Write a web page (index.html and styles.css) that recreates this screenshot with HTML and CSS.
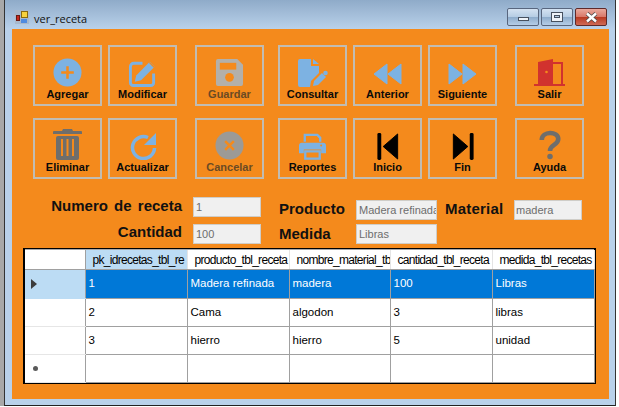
FILE: index.html
```html
<!DOCTYPE html>
<html lang="es">
<head>
  <meta charset="UTF-8" />
  <title>ver_receta</title>
  <meta name="viewport" content="width=device-width, initial-scale=1" />
  <link rel="stylesheet" href="styles.css">
</head>
<body>

  <div class="window">
    <div class="titlebar">
      <svg class="appicon" width="14" height="14" viewBox="0 0 14 14">
        <rect x="0" y="0" width="14" height="14" fill="#a9b9cc"/>
        <rect x="6.500" y="1.500" width="6" height="6" fill="#f7d23e" stroke="#8a6a10"/>
        <rect x="1.500" y="5.500" width="3" height="5" fill="#c8281e" stroke="#6d1a12"/>
        <rect x="6" y="9" width="6" height="4" fill="#4f8be0"/>
      </svg>
      <span class="wintitle">ver_receta</span>
      <div class="wincontrols">
        <div class="winbtn"><span class="min-glyph"></span></div>
        <div class="winbtn"><span class="max-glyph"></span></div>
        <div class="winbtn close">
          <svg width="13" height="11" viewBox="0 0 13 11"><path d="M2 1.500 L11 9.500 M11 1.500 L2 9.500" stroke="#4a4a4a" stroke-width="4"/><path d="M2 1.500 L11 9.500 M11 1.500 L2 9.500" stroke="#fff" stroke-width="2.400"/></svg>
        </div>
      </div>
    </div>

    <div class="content">
      <div class="toolbar">
        <div class="tool">
          <svg width="29" height="29" viewBox="0 0 30 30"><circle cx="15" cy="15" r="14.500" fill="#7db2e2"/><path d="M15 8.500v13M8.500 15h13" stroke="#f48a1c" stroke-width="2.600"/></svg>
          <span>Agregar</span>
        </div>
        <div class="tool">
          <svg width="29" height="29" viewBox="0 0 30 30"><path d="M15 5.500H6a3.500 3.500 0 0 0-3.500 3.500v16.500A3 3 0 0 0 5.500 28.500h18a3 3 0 0 0 3-3V16" fill="none" stroke="#7db2e2" stroke-width="3"/><path d="M8.500 18l14-14 5 5-14 14-6.500 1.500z" fill="#7db2e2"/><path d="M22 4.500l5 5" stroke="#f48a1c" stroke-width="1.300"/></svg>
          <span>Modificar</span>
        </div>
        <div class="tool gap">
          <svg width="29" height="29" viewBox="0 0 30 30"><path d="M3 1h20l6 6v20a2 2 0 0 1-2 2H3a2 2 0 0 1-2-2V3a2 2 0 0 1 2-2z" fill="#b3b0aa"/><rect x="5" y="5" width="17" height="7" fill="#f48a1c"/><circle cx="15" cy="20" r="4.500" fill="#f48a1c"/></svg>
          <span class="off">Guardar</span>
        </div>
        <div class="tool gap-small">
          <svg width="30" height="28" viewBox="0 0 30 28"><path d="M2 0h11v7h8v7l-8 8-1 6H2a2 2 0 0 1-2-2V2a2 2 0 0 1 2-2z" fill="#7db2e2"/><path d="M15 0l6 5h-6z" fill="#7db2e2"/><path d="M15 27l1-5 8-8 4 4-8 8z" fill="#7db2e2"/><circle cx="27.500" cy="14" r="2.300" fill="#7db2e2"/></svg>
          <span>Consultar</span>
        </div>
        <div class="tool">
          <svg class="ic-arrows" width="29" height="22" viewBox="0 0 29 22"><path d="M14 1v20L1 11zM28 1v20L15 11z" fill="#7db2e2" stroke="#7db2e2" stroke-linejoin="round"/></svg>
          <span>Anterior</span>
        </div>
        <div class="tool">
          <svg class="ic-arrows" width="29" height="22" viewBox="0 0 29 22"><path d="M1 1v20l13-10zM15 1v20l13-10z" fill="#7db2e2" stroke="#7db2e2" stroke-linejoin="round"/></svg>
          <span>Siguiente</span>
        </div>
        <div class="tool gap-wide">
          <svg width="31" height="28" viewBox="0 0 31 28"><path d="M4 3l15-3v27H0v-2h4z" fill="#d1322e"/><circle cx="12.500" cy="13" r="1.300" fill="#f48a1c"/><path d="M19 4h9v22h3" fill="none" stroke="#d1322e" stroke-width="2"/><path d="M19 26h12" stroke="#d1322e" stroke-width="2"/></svg>
          <span>Salir</span>
        </div>
      </div>

      <div class="toolbar second">
        <div class="tool">
          <svg width="29" height="32" viewBox="0 0 29 32"><path d="M10 1h9l1 2h8a1 1 0 0 1 1 1v2H0V4a1 1 0 0 1 1-1h8z" fill="#6f6e6b"/><rect x="3" y="8" width="23" height="24" rx="2" fill="#6f6e6b"/><path d="M9 11v17M14.500 11v17M20 11v17" stroke="#f48a1c" stroke-width="2"/></svg>
          <span>Eliminar</span>
        </div>
        <div class="tool">
          <svg width="28" height="28" viewBox="0 0 28 28"><path d="M25.500 16A11 11 0 1 1 19 5.500" fill="none" stroke="#7db2e2" stroke-width="3.500"/><path d="M27 1v12H15z" fill="#7db2e2"/></svg>
          <span>Actualizar</span>
        </div>
        <div class="tool gap">
          <svg width="29" height="29" viewBox="0 0 30 30"><circle cx="15" cy="15" r="14.500" fill="#9c9a96"/><path d="M10.500 10.500l9 9M19.500 10.500l-9 9" stroke="#f48a1c" stroke-width="2.600"/></svg>
          <span class="off">Cancelar</span>
        </div>
        <div class="tool gap-small">
          <svg width="27" height="27" viewBox="0 0 28 28"><path d="M6 9V2h13l3 3v4" fill="none" stroke="#7db2e2" stroke-width="2.400"/><path d="M3 10h22a3 3 0 0 1 3 3v8h-5v-4H5v4H0v-8a3 3 0 0 1 3-3z" fill="#7db2e2"/><path d="M6.500 19h15v7.500h-15z" fill="none" stroke="#7db2e2" stroke-width="2.400"/><circle cx="23" cy="13" r="1" fill="#f48a1c"/></svg>
          <span>Reportes</span>
        </div>
        <div class="tool">
          <svg width="22" height="27" viewBox="0 0 22 28"><rect x="0" y="0" width="4" height="28" rx="1.500"/><path d="M21 1v26L6 14z" stroke="#000" stroke-linejoin="round"/></svg>
          <span>Inicio</span>
        </div>
        <div class="tool">
          <svg width="22" height="27" viewBox="0 0 22 28"><rect x="18" y="0" width="4" height="28" rx="1.500"/><path d="M1 1v26l15-13z" stroke="#000" stroke-linejoin="round"/></svg>
          <span>Fin</span>
        </div>
        <div class="tool gap-wide">
          <svg width="22" height="31" viewBox="0 0 24 32"><path d="M3 11C3 1 21 1 21 10c0 7-9 6-9 13" fill="none" stroke="#6f6e6b" stroke-width="5"/><circle cx="12" cy="29" r="3" fill="#6f6e6b"/></svg>
          <span>Ayuda</span>
        </div>
      </div>

      <div class="form">
        <label class="lbl lbl-numero">Numero de receta</label>
        <div class="field f-numero">1</div>
        <label class="lbl lbl-producto">Producto</label>
        <div class="field f-producto">Madera refinada</div>
        <label class="lbl lbl-material">Material</label>
        <div class="field f-material">madera</div>
        <label class="lbl lbl-cantidad">Cantidad</label>
        <div class="field f-cantidad">100</div>
        <label class="lbl lbl-medida">Medida</label>
        <div class="field f-medida">Libras</div>
      </div>

      <div class="grid">
        <table>
          <colgroup>
            <col class="c-head"><col class="c-1"><col class="c-2"><col class="c-3"><col class="c-4"><col class="c-5">
          </colgroup>
          <thead>
            <tr>
              <th class="rowhead"></th>
              <th class="sel-col">pk_idrecetas_tbl_re</th>
              <th>producto_tbl_receta</th>
              <th>nombre_material_tbl</th>
              <th>cantidad_tbl_receta</th>
              <th>medida_tbl_recetas</th>
            </tr>
          </thead>
          <tbody>
            <tr class="sel">
              <td class="rowhead"><svg width="6" height="10" viewBox="0 0 6 10"><path d="M0 0l6 5-6 5z" fill="#3c3c3c"/></svg></td>
              <td>1</td><td>Madera refinada</td><td>madera</td><td>100</td><td>Libras</td>
            </tr>
            <tr>
              <td class="rowhead"></td>
              <td>2</td><td>Cama</td><td>algodon</td><td>3</td><td>libras</td>
            </tr>
            <tr>
              <td class="rowhead"></td>
              <td>3</td><td>hierro</td><td>hierro</td><td>5</td><td>unidad</td>
            </tr>
            <tr>
              <td class="rowhead"><span class="star"></span></td>
              <td></td><td></td><td></td><td></td><td></td>
            </tr>
          </tbody>
        </table>
      </div>
    </div>
  </div>

</body>
</html>
```

FILE: styles.css
```css
html, body {
  margin: 0;
  height: 100%;
  background: #fff;
}
body {
  overflow: hidden;
  font-family: "Liberation Sans", Arial, sans-serif;
  color: #000;
}
.window {
  box-sizing: border-box;
  width: 612px;
  height: 406px;
  margin-left: 4px;
  padding: 0 6px 6px 7px;
  background: #b9d1ea;
  border-left: 1px solid #333;
  border-bottom: 1px solid #222;
  border-right: 1px solid #333;
  box-shadow: -4px 0 0 #a8a8a8;
  display: flex;
  flex-direction: column;
}

/* title bar */
.titlebar {
  height: 29px;
  margin: 0 -6px 0 -7px;
  padding: 0 8px 0 10px;
  background: linear-gradient(#8fabc9, #b9d1ea);
  display: flex;
  align-items: center;
  flex: none;
}
.appicon {
  margin-right: 5px;
  margin-top: 5px;
}
.wintitle {
  font-family: "Open Sans", sans-serif;
  font-size: 11px;
  color: #111;
  margin-top: 7px;
}
.wincontrols {
  margin-left: auto;
  display: flex;
  gap: 2px;
  align-self: flex-start;
  margin-top: 8px;
}
.winbtn {
  box-sizing: border-box;
  width: 32px;
  height: 18px;
  border: 1px solid #58667e;
  border-radius: 2px;
  background: linear-gradient(#d4e2f1 0%, #b6cde4 48%, #8eaccb 52%, #b5cde6 100%);
  display: flex;
  align-items: center;
  justify-content: center;
}
.winbtn.close {
  background: linear-gradient(#e9a99c 0%, #d9796a 48%, #b93a22 52%, #cf6a55 100%);
  border-color: #5e2a2a;
}
.min-glyph {
  width: 9px;
  height: 2px;
  margin-top: 4px;
  background: #eef3f9;
  border: 1px solid #46505f;
}
.max-glyph {
  box-sizing: border-box;
  width: 12px;
  height: 10px;
  border: 1px solid #46505f;
  background: #eef3f9;
}
.max-glyph::after {
  content: "";
  display: block;
  width: 6px;
  height: 3px;
  margin: 2px 0 0 2px;
  background: #b6cde4;
  border: 1px solid #46505f;
  box-sizing: border-box;
}

/* orange panel */
.content {
  flex: 1;
  background: #f48a1c;
  padding: 16px 0 0 21px;
  min-height: 0;
}
.toolbar {
  display: flex;
  gap: 6px;
}
.toolbar.second {
  margin-top: 12px;
}
.tool {
  box-sizing: border-box;
  width: 69px;
  height: 61px;
  border: 2px solid #c1bcb2;
  display: flex;
  flex-direction: column;
  align-items: center;
  justify-content: flex-end;
  padding-bottom: 3px;
}
.tool svg {
  flex: none;
  margin-bottom: 1px;
}
.tool svg.ic-arrows {
  margin-bottom: 3px;
}
.tool span {
  font-size: 11px;
  font-weight: bold;
  line-height: 13px;
  color: #0a0a0a;
}
.tool span.off {
  color: #6b4a24;
}
.tool.gap {
  margin-left: 12px;
}
.tool.gap-small {
  margin-left: 8px;
}
.tool.gap-wide {
  margin-left: 12px;
}

/* fields */
.form {
  display: grid;
  grid-template-columns: 160px 68px 95px 81px 77px 68px;
  grid-template-rows: 20px 20px;
  row-gap: 7px;
  margin: 18px 0 0 0;
  width: 560px;
}
.lbl {
  font-size: 15px;
  font-weight: bold;
  line-height: 20px;
  color: #111;
  white-space: nowrap;
}
.lbl-numero, .lbl-cantidad {
  text-align: right;
  padding-right: 11px;
  margin-top: -2px;
}
.lbl-numero {
  word-spacing: 2px;
  margin-top: -1px;
}
.lbl-producto, .lbl-medida {
  padding-left: 18px;
}
.lbl-material {
  padding-left: 8px;
  letter-spacing: 0.2px;
}
.lbl-producto, .lbl-material {
  margin-top: 2px;
}
.field {
  box-sizing: border-box;
  height: 20px;
  background: #f0f0f0;
  border: 1px solid #cfcdc8;
  font-size: 11px;
  line-height: 18px;
  color: #6d6d6d;
  padding-left: 2px;
  white-space: nowrap;
  overflow: hidden;
}
.f-producto, .f-material {
  margin-top: 3px;
}
.f-material {
  padding-left: 1px;
}

/* data grid */
.grid {
  box-sizing: border-box;
  width: 573px;
  height: 136px;
  margin: 4px 0 0 -10px;
  border: 1px solid #000;
  border-width: 1px 2px 1px 2px;
  background: #a9a9a9;
  padding-top: 1px;
}
table {
  border-collapse: collapse;
  table-layout: fixed;
  width: 569px;
  font-size: 11.5px;
  background: #fff;
}
.c-head { width: 60px; }
.c-1 { width: 102px; }
.c-2 { width: 102px; }
.c-3 { width: 101px; }
.c-4 { width: 102px; }
.c-5 { width: 102px; }
th, td {
  padding: 0 0 2px 3px;
  text-align: left;
  font-weight: normal;
  white-space: nowrap;
  overflow: hidden;
  border-right: 1px solid #a0a0a0;
  border-bottom: 1px solid #a0a0a0;
}
th {
  height: 19px;
  padding: 0 0 0 7px;
  font-size: 12px;
  letter-spacing: -0.7px;
  border-right: 1px solid #e4e4e4;
  border-bottom: 1px solid #a0a0a0;
}
td {
  height: 25px;
}
tr.sel td {
  height: 26px;
  background: #0078d7;
  color: #fff;
}
th.sel-col {
  background: #bcdcf4;
}
td.rowhead, th.rowhead {
  border-right: 1px solid #a0a0a0;
  border-bottom-color: #e6e6e6;
  background: #fff;
  padding: 0 0 0 6px;
}
th.rowhead {
  border-bottom-color: #a0a0a0;
}
tr.sel td.rowhead {
  background: #bcdcf4;
  border-bottom-color: #bcdcf4;
}
tr.sel td.rowhead svg {
  display: block;
}
.star {
  display: block;
  width: 5px;
  height: 5px;
  margin-left: 2px;
  border-radius: 50%;
  background: #5a5a5a;
}
```
